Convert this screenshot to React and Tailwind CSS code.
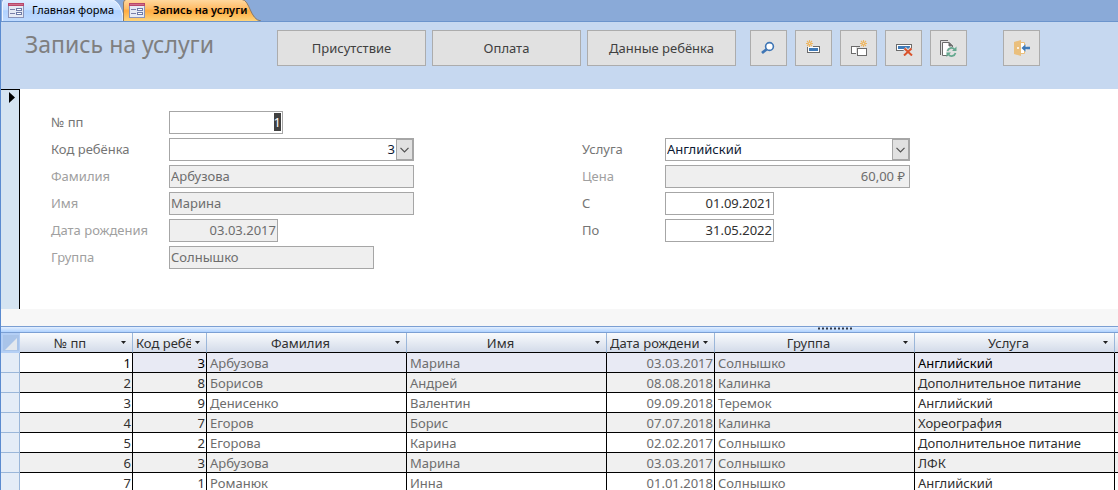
import { useEffect, useRef } from "react";

const rows = [
  ["1", "3", "Арбузова", "Марина", "03.03.2017", "Солнышко", "Английский"],
  ["2", "8", "Борисов", "Андрей", "08.08.2018", "Калинка", "Дополнительное питание"],
  ["3", "9", "Денисенко", "Валентин", "09.09.2018", "Теремок", "Английский"],
  ["4", "7", "Егоров", "Борис", "07.07.2018", "Калинка", "Хореография"],
  ["5", "2", "Егорова", "Карина", "02.02.2017", "Солнышко", "Дополнительное питание"],
  ["6", "3", "Арбузова", "Марина", "03.03.2017", "Солнышко", "ЛФК"],
  ["7", "1", "Романюк", "Инна", "01.01.2018", "Солнышко", "Английский"],
];

const columns = ["№ пп", "Код ребёнка", "Фамилия", "Имя", "Дата рождения", "Группа", "Услуга"];

function FormIcon() {
  return (
    <svg width="16" height="15" viewBox="0 0 16 15" shapeRendering="crispEdges" aria-hidden="true">
      <rect x="0" y="0" width="16" height="15" fill="#8a93b8" />
      <rect x="1" y="3" width="14" height="11" fill="#e6eaf4" />
      <rect x="0" y="0" width="16" height="3" fill="#b8476a" />
      <rect x="1" y="1" width="14" height="1" fill="#cf6f8c" />
      <path d="M2 6h5v1H2zM2 10h5v1H2z" fill="#7a7fa8" />
      <rect x="8.5" y="5.5" width="5" height="2" fill="#fff" stroke="#6f7ba8" />
      <rect x="8.5" y="9.5" width="5" height="2" fill="#fff" stroke="#6f7ba8" />
    </svg>
  );
}

function Tab({ label, active }) {
  return (
    <a
      href="#"
      aria-current={active ? "page" : undefined}
      className={
        "relative flex h-[21px] items-center gap-2 pb-px pl-[6px] text-[11px] leading-4 text-black " +
        (active ? "w-[138px] font-semibold" : "w-[121px]")
      }
    >
      {active ? (
        <svg className="absolute top-0 left-0" width="138" height="21" aria-hidden="true">
          <defs>
            <linearGradient id="tabOn" x1="0" y1="0" x2="0" y2="1">
              <stop offset="0" stopColor="#ffd9a0" />
              <stop offset=".4" stopColor="#ffbd69" />
              <stop offset=".5" stopColor="#ffab3f" />
              <stop offset="1" stopColor="#fdd882" />
            </linearGradient>
          </defs>
          <path d="M.5 22V3Q.5 0 3 -.5H119C127 0 127 20 138 21" fill="url(#tabOn)" stroke="#8b7a66" />
        </svg>
      ) : (
        <svg className="absolute top-0 left-0" width="121" height="21" aria-hidden="true">
          <defs>
            <linearGradient id="tabOff" x1="0" y1="0" x2="0" y2="1">
              <stop offset="0" stopColor="#dcebff" />
              <stop offset=".45" stopColor="#c6dfff" />
              <stop offset=".5" stopColor="#b0d2ff" />
              <stop offset="1" stopColor="#c0dbff" />
            </linearGradient>
          </defs>
          <path d="M.5 22V3Q.5 0 3 -.5H108C116 0 119 8 121 16V22" fill="url(#tabOff)" stroke="#eef5ff" />
        </svg>
      )}
      <span className="relative">
        <FormIcon />
      </span>
      <span className="relative whitespace-nowrap">{label}</span>
    </a>
  );
}

function Spark({ x, y }) {
  return (
    <g transform={`translate(${x} ${y})`} stroke="#eeb660" strokeWidth="1.1" fill="none">
      <path d="M3.5 0v2M3.5 5v2M0 3.5h2M5 3.5h2M1 1l1.3 1.3M6 1L4.7 2.3M1 6l1.3-1.3M6 6L4.7 4.7" />
      <circle cx="3.5" cy="3.5" r="1.3" />
    </g>
  );
}

function SearchIcon() {
  return (
    <svg width="16" height="16" viewBox="0 0 16 16" aria-hidden="true">
      <path d="M1 13L6 9" stroke="#3f76b5" strokeWidth="2.8" />
      <circle cx="8.5" cy="6.5" r="3.900" fill="#fff" stroke="#3f76b5" strokeWidth="1.6" />
    </svg>
  );
}

function NewRecordIcon() {
  return (
    <svg width="16" height="16" viewBox="0 0 16 16" aria-hidden="true">
      <rect x="1.5" y="6.5" width="12" height="6" fill="#fff" stroke="#6b6b6b" />
      <rect x="3" y="8" width="9" height="3" fill="#3f7ab8" />
      <rect x="0" y="0" width="7" height="7" fill="#e1e1e1" />
      <Spark x="0" y="0" />
    </svg>
  );
}

function DuplicateIcon() {
  return (
    <svg width="18" height="16" viewBox="0 0 18 16" aria-hidden="true">
      <rect x="1.5" y="6.5" width="8" height="7" fill="#fff" stroke="#6b6b6b" />
      <rect x="6" y="7" width="12" height="9" fill="#e1e1e1" />
      <rect x="7.5" y="8.5" width="9" height="7" fill="#fff" stroke="#6b6b6b" />
      <Spark x="10" y="0" />
    </svg>
  );
}

function DeleteIcon() {
  return (
    <svg width="18" height="16" viewBox="0 0 18 16" aria-hidden="true">
      <rect x="1.5" y="4.5" width="15" height="6" fill="#fff" stroke="#6b6b6b" />
      <rect x="3" y="6" width="12" height="3" fill="#3f7ab8" />
      <path d="M9.500 8.500L17 15.500M16.500 8.500L9 15.500" stroke="#e1e1e1" strokeWidth="4" />
      <path d="M9.5 8.5L17 15.5M16.5 8.5L9 15.5" stroke="#d9532c" strokeWidth="2" />
    </svg>
  );
}

function RefreshIcon() {
  return (
    <svg width="17" height="17" viewBox="0 0 17 17" aria-hidden="true">
      <path d="M.5 15V.5H8" fill="none" stroke="#6b6b6b" />
      <path d="M2.500 15.500V2.500H9L12.500 6V15.500z" fill="#fff" stroke="#6b6b6b" />
      <path d="M9 2.500V6h3.500z" fill="#6b6b6b" stroke="#6b6b6b" />
      <circle cx="11.500" cy="12" r="5.300" fill="#e1e1e1" />
      <path d="M7.500 11A4 4 0 0 1 14.500 9.500M15.500 13A4 4 0 0 1 8.500 14.500" fill="none" stroke="#64a88f" strokeWidth="1.7" />
      <path d="M16.500 6.500V11H12zM6.500 17V12.500H11z" fill="#64a88f" />
    </svg>
  );
}

function ExitIcon() {
  return (
    <svg width="17" height="16" viewBox="0 0 17 16" aria-hidden="true">
      <path d="M7 2.500H11.500V13.500H7" fill="#fff" stroke="#eabf7c" />
      <path d="M1 2L8 0V16L1 14z" fill="#eabf7c" />
      <circle cx="5" cy="8" r="1" fill="#fff" />
      <path d="M10.500 5.500h3v5h-3z" fill="#fff" />
      <path d="M8.500 8l4-3.800v2.600H17v2.400H12.500v2.600z" fill="#3f7ab8" />
    </svg>
  );
}

function TextButton({ children }) {
  return (
    <button
      type="button"
      className="h-9 w-[149px] border border-[#acacac] bg-[#e1e1e1] text-[13px] text-[#404040]"
    >
      {children}
    </button>
  );
}

function IconButton({ label, children }) {
  return (
    <button
      type="button"
      aria-label={label}
      className="flex h-9 w-[37px] items-center justify-center border border-[#acacac] bg-[#e1e1e1]"
    >
      {children}
    </button>
  );
}

function Field({ id, label, muted, short, children }) {
  return (
    <div className="flex h-[23px] items-center">
      <label
        htmlFor={id}
        className={
          "shrink-0 pb-px " +
          (short ? "w-[83px] " : "w-[118px] ") +
          (muted ? "text-[#a0a0a0]" : "text-[#757575]")
        }
      >
        {label}
      </label>
      {children}
    </div>
  );
}

const box = "h-[23px] border border-[#a6a6a6] pl-px pb-px outline-none ";
const locked = box + "bg-[#efefef] text-[#6d6d6d] ";

function Combo({ id, value, className }) {
  return (
    <div className="relative w-[245px]">
      <select
        id={id}
        defaultValue={value}
        className={box + "w-full appearance-none bg-white pr-[18px] text-[#0d1a33] " + className}
      >
        <option>{value}</option>
      </select>
      <span className="pointer-events-none absolute top-px right-px flex h-[21px] w-[17px] items-center justify-center border border-[#a6a6a6] bg-[#e1e1e1]">
        <svg width="9" height="6" viewBox="0 0 9 6" aria-hidden="true">
          <path d="M.5 .8L4.500 4.800L8.500 .8" fill="none" stroke="#505050" strokeWidth="1.200" />
        </svg>
      </span>
    </div>
  );
}

function cellClass(row, col) {
  const align = col < 2 || col === 4 ? "text-right pr-px " : "text-left pl-[3px] ";
  const tone =
    col >= 2 && col <= 5 ? "text-[#6d6d6d] " : row === 0 ? "text-black " : "text-[#303030] ";
  const fill = row === 0 && col > 0 ? "bg-[#e8eaf4] " : row % 2 ? "bg-[#f0f0f0] " : "bg-white ";
  return "h-5 overflow-hidden border-r border-b border-black py-0 whitespace-nowrap " + align + tone + fill;
}

export default function App() {
  const first = useRef(null);
  useEffect(() => {
    first.current.focus();
    first.current.select();
  }, []);

  return (
    <div className="h-screen overflow-hidden border-l border-[#5b8bd0] bg-white font-['Noto_Sans','Open_Sans',sans-serif] text-[13px] leading-[18px]">
      <nav className="flex h-[22px] border-b border-[#6b94cc] bg-[#8aaad8] pl-px">
        <Tab label="Главная форма" />
        <Tab label="Запись на услуги" active />
      </nav>

      <header className="flex h-[67px] items-start bg-[#c6d8f0] pt-2 pl-6">
        <h1 className="w-[252px] shrink-0 text-[23px] leading-7 text-[#7f7f7f]">Запись на услуги</h1>
        <div className="flex gap-[6px]">
          <TextButton>Присутствие</TextButton>
          <TextButton>Оплата</TextButton>
          <TextButton>Данные ребёнка</TextButton>
        </div>
        <div className="ml-[14px] flex gap-2">
          <IconButton label="Найти"><SearchIcon /></IconButton>
          <IconButton label="Добавить запись"><NewRecordIcon /></IconButton>
          <IconButton label="Дублировать запись"><DuplicateIcon /></IconButton>
          <IconButton label="Удалить запись"><DeleteIcon /></IconButton>
          <IconButton label="Обновить"><RefreshIcon /></IconButton>
        </div>
        <div className="ml-9">
          <IconButton label="Закрыть форму"><ExitIcon /></IconButton>
        </div>
      </header>

      <main>
        <form className="flex h-[220px]">
          <div className="w-[19px] shrink-0 border-t border-r border-black bg-[#d5e4f2] pt-[2px] pl-2">
            <svg width="6" height="11" viewBox="0 0 6 11" aria-hidden="true">
              <path d="M0 0L6 5.500L0 11z" fill="#000" />
            </svg>
          </div>
          <div className="flex flex-1 pt-[22px] pl-[31px]">
            <div className="flex w-[531px] flex-col gap-1">
              <Field id="num" label="№ пп">
                <input
                  id="num"
                  ref={first}
                  defaultValue="1"
                  className={box + "w-[114px] bg-white pr-px text-right selection:bg-[#404040] selection:text-white"}
                />
              </Field>
              <Field id="child" label="Код ребёнка">
                <Combo id="child" value="3" className="text-right" />
              </Field>
              <Field id="surname" label="Фамилия" muted>
                <input id="surname" readOnly value="Арбузова" className={locked + "w-[245px]"} />
              </Field>
              <Field id="name" label="Имя" muted>
                <input id="name" readOnly value="Марина" className={locked + "w-[245px]"} />
              </Field>
              <Field id="birth" label="Дата рождения" muted>
                <input id="birth" readOnly value="03.03.2017" className={locked + "w-[109px] pr-px text-right"} />
              </Field>
              <Field id="group" label="Группа" muted>
                <input id="group" readOnly value="Солнышко" className={locked + "w-[205px]"} />
              </Field>
            </div>
            <div className="flex flex-col gap-1 pt-[27px]">
              <Field short id="service" label="Услуга">
                <Combo id="service" value="Английский" className="text-left" />
              </Field>
              <Field short id="price" label="Цена" muted>
                <input id="price" readOnly value="60,00 ₽" className={locked + "w-[245px] pr-1 text-right"} />
              </Field>
              <Field short id="from" label="С">
                <input id="from" defaultValue="01.09.2021" className={box + "w-[109px] bg-white pr-px text-right text-[#303030]"} />
              </Field>
              <Field short id="to" label="По">
                <input id="to" defaultValue="31.05.2022" className={box + "w-[109px] bg-white pr-px text-right text-[#303030]"} />
              </Field>
            </div>
          </div>
        </form>

        <div className="h-[17px] bg-[#f7f7f7]" />

        <div className="flex h-[7px] justify-center border-y border-[#7b9fd3] bg-linear-to-b from-[#e3efff] to-[#afd2ff] pl-[552px]">
          <svg width="36" height="3" aria-hidden="true">
            <path d="M0 1.500H36" stroke="#303848" strokeWidth="2" strokeDasharray="2 2" />
          </svg>
        </div>

        <table className="w-full table-fixed border-separate border-spacing-0">
          <colgroup>
            <col className="w-[19px]" />
            <col className="w-[113px]" />
            <col className="w-[74px]" />
            <col className="w-[200px]" />
            <col className="w-[200px]" />
            <col className="w-[108px]" />
            <col className="w-[200px]" />
            <col className="w-[200px]" />
            <col />
          </colgroup>
          <thead>
            <tr>
              <th aria-label="Выделить все" className="h-5 border-2 border-r border-[#b4cff5] bg-[#a9c4e9] p-0">
                <svg className="mt-[2px] ml-[2px]" width="12" height="12" viewBox="0 0 12 12" aria-hidden="true">
                  <path d="M12 0V12H0z" fill="#e3e8ee" />
                </svg>
              </th>
              {columns.map((c) => (
                <th
                  key={c}
                  scope="col"
                  className="h-5 border-r border-b border-r-[#9ab6d9] border-b-black bg-linear-to-b from-[#f9fbfd] to-[#d3dbe9] p-0 font-normal text-[#303030]"
                >
                  <div className="flex items-center pr-[5px] pl-[3px]">
                    <span
                      className={
                        c.length > 10
                          ? "flex-1 overflow-hidden text-left whitespace-nowrap"
                          : "flex-1 overflow-hidden text-center whitespace-nowrap"
                      }
                    >
                      {c}
                    </span>
                    <svg className="ml-[3px] shrink-0" width="7" height="4" viewBox="0 0 7 4" aria-hidden="true">
                      <path d="M1 0H6L3.500 3z" fill="#202020" />
                    </svg>
                  </div>
                </th>
              ))}
              <td className="border-b border-black bg-linear-to-b from-[#f9fbfd] to-[#d3dbe9] p-0" />
            </tr>
          </thead>
          <tbody>
            {rows.map((r, i) => (
              <tr key={r[0]}>
                <td className="h-5 border-r border-b border-[#9ab6d9] bg-[#e4ecf7] p-0" />
                {r.map((v, j) => (
                  <td key={j} className={cellClass(i, j)}>
                    {v}
                  </td>
                ))}
                <td className={"border-b border-black p-0 " + (i === 0 ? "bg-[#e8eaf4]" : i % 2 ? "bg-[#f0f0f0]" : "bg-white")} />
              </tr>
            ))}
          </tbody>
        </table>
      </main>
    </div>
  );
}
